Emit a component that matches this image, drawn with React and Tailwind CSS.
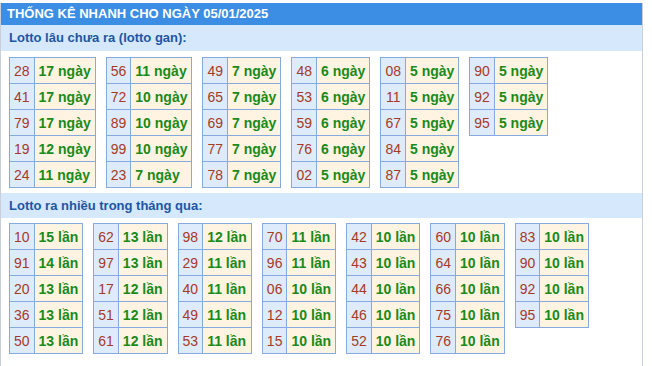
const gan = [
  [["28","17"],["41","17"],["79","17"],["19","12"],["24","11"]],
  [["56","11"],["72","10"],["89","10"],["99","10"],["23","7"]],
  [["49","7"],["65","7"],["69","7"],["77","7"],["78","7"]],
  [["48","6"],["53","6"],["59","6"],["76","6"],["02","5"]],
  [["08","5"],["11","5"],["67","5"],["84","5"],["87","5"]],
  [["90","5"],["92","5"],["95","5"]],
];
const nhieu = [
  [["10","15"],["91","14"],["20","13"],["36","13"],["50","13"]],
  [["62","13"],["97","13"],["17","12"],["51","12"],["61","12"]],
  [["98","12"],["29","11"],["40","11"],["49","11"],["53","11"]],
  [["70","11"],["96","11"],["06","10"],["12","10"],["15","10"]],
  [["42","10"],["43","10"],["44","10"],["46","10"],["52","10"]],
  [["60","10"],["64","10"],["66","10"],["75","10"],["76","10"]],
  [["83","10"],["90","10"],["92","10"],["95","10"]],
];

function Tbl({ rows, unit }) {
  return (
    <table className="border-collapse border border-[#86a9de] self-start">
      <tbody>
        {rows.map(([n, v], i) => (
          <tr key={i} className="h-[26px]">
            <td className="border border-[#86a9de] bg-[#deebfb] px-[4px] text-center text-[14px] text-[#a53a28] leading-none">{n}</td>
            <td className="border border-[#86a9de] bg-[#fff4e2] px-[4px] text-left text-[14px] font-bold text-[#1a8a1a] leading-none whitespace-nowrap">{v} {unit}</td>
          </tr>
        ))}
      </tbody>
    </table>
  );
}

export default function App() {
  return (
    <div className="w-[652px] h-[366px] bg-white overflow-hidden" style={{ fontFamily: '"Liberation Sans", Arial, sans-serif' }}>
      <div className="mt-[3px] w-[643px] h-[363px] border-l border-r border-[#c9ced8]">
        <div className="h-[22px] bg-[#3b8ee4] pl-[6px] flex items-center text-white font-bold text-[13px]">THỐNG KÊ NHANH CHO NGÀY 05/01/2025</div>
        <div className="h-[26px] bg-[#d6e8fb] pl-[8px] flex items-center text-[#1d56a3] text-[13px] font-bold">Lotto lâu chưa ra (lotto gan):</div>
        <div className="flex gap-[10px] pl-[8px] pt-[6px] pb-[5px]">
          {gan.map((t, i) => <Tbl key={i} rows={t} unit="ngày" />)}
        </div>
        <div className="h-[25px] bg-[#d6e8fb] pl-[8px] flex items-center text-[#1d56a3] text-[13px] font-bold">Lotto ra nhiều trong tháng qua:</div>
        <div className="flex gap-[10px] pl-[8px] pt-[5px]">
          {nhieu.map((t, i) => <Tbl key={i} rows={t} unit="lần" />)}
        </div>
      </div>
    </div>
  );
}
